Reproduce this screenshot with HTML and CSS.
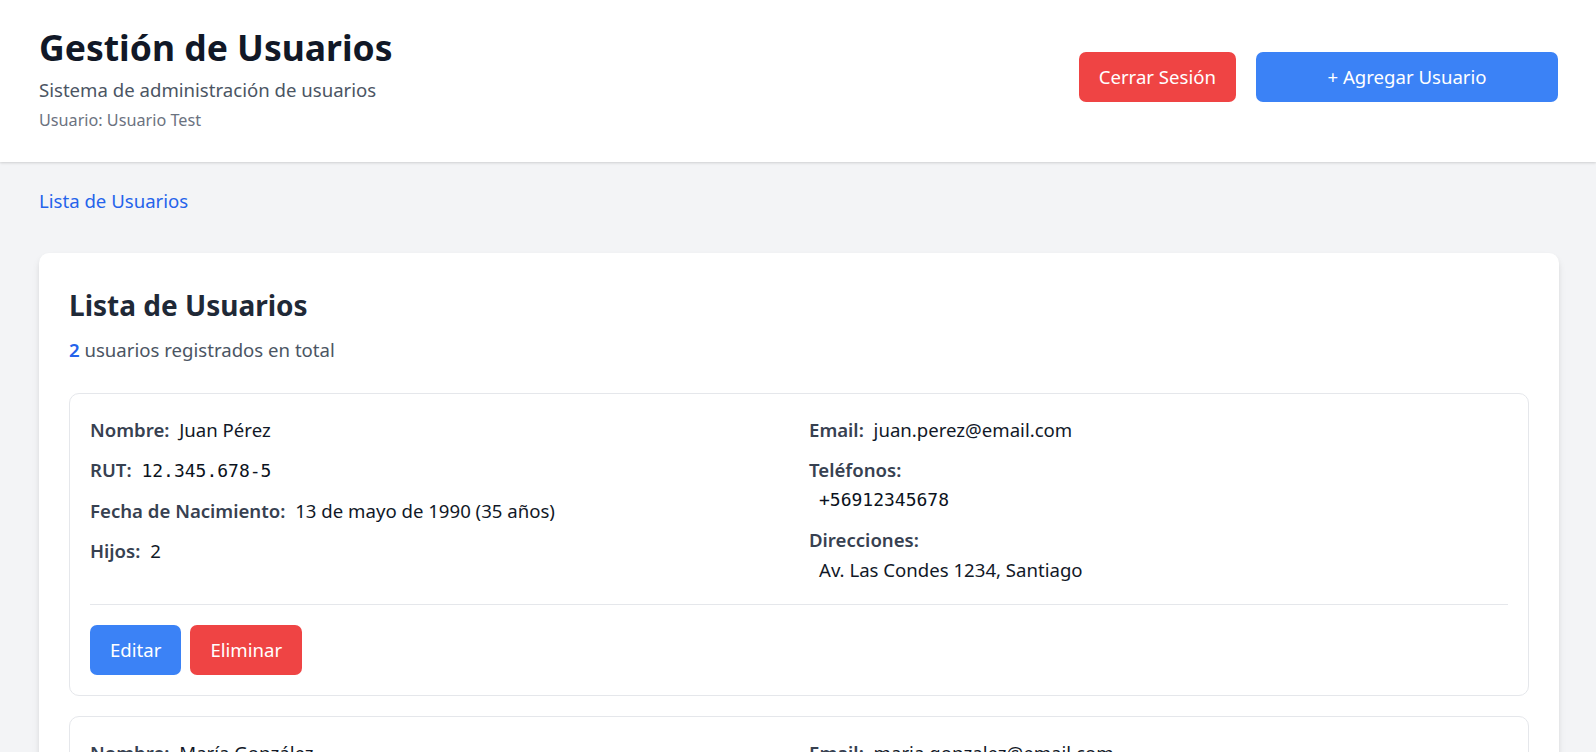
FILE: index.html
```html
<!DOCTYPE html>
<html lang="es">
<head>
<meta charset="utf-8">
<title>Gestión de Usuarios</title>
<link rel="stylesheet" href="styles.css">
</head>
<body>
<header class="app-header">
  <div class="header-inner">
    <div class="header-text">
      <h1 class="app-title">Gestión de Usuarios</h1>
      <p class="app-subtitle">Sistema de administración de usuarios</p>
      <p class="app-user">Usuario: Usuario Test</p>
    </div>
    <div class="header-actions">
      <button class="btn btn-red">Cerrar Sesión</button>
      <button class="btn btn-blue btn-wide">+ Agregar Usuario</button>
    </div>
  </div>
</header>
<nav class="breadcrumb"><a class="crumb-link" href="#">Lista de Usuarios</a></nav>
<main class="main">
  <section class="panel">
    <h2 class="panel-title">Lista de Usuarios</h2>
    <p class="panel-count"><span class="count-num">2</span> usuarios registrados en total</p>
    <div class="user-list">
      <article class="user-card">
        <div class="user-grid">
          <div class="col">
            <div class="field"><span class="label">Nombre:</span> <span class="value">Juan Pérez</span></div>
            <div class="field"><span class="label">RUT:</span> <span class="value mono">12.345.678-5</span></div>
            <div class="field"><span class="label">Fecha de Nacimiento:</span> <span class="value">13 de mayo de 1990 (35 años)</span></div>
            <div class="field"><span class="label">Hijos:</span> <span class="value">2</span></div>
          </div>
          <div class="col">
            <div class="field"><span class="label">Email:</span> <span class="value">juan.perez@email.com</span></div>
            <div class="field field-stack"><span class="label">Teléfonos:</span>
              <ul class="sublist sublist-mono"><li class="mono">+56912345678</li></ul>
            </div>
            <div class="field field-stack"><span class="label">Direcciones:</span>
              <ul class="sublist"><li>Av. Las Condes 1234, Santiago</li></ul>
            </div>
          </div>
        </div>
        <div class="card-actions">
          <button class="btn btn-blue">Editar</button>
          <button class="btn btn-red">Eliminar</button>
        </div>
      </article>
      <article class="user-card">
        <div class="user-grid">
          <div class="col">
            <div class="field"><span class="label">Nombre:</span> <span class="value">María González</span></div>
            <div class="field"><span class="label">RUT:</span> <span class="value mono">98.765.432-1</span></div>
            <div class="field"><span class="label">Fecha de Nacimiento:</span> <span class="value">22 de agosto de 1985 (40 años)</span></div>
            <div class="field"><span class="label">Hijos:</span> <span class="value">1</span></div>
          </div>
          <div class="col">
            <div class="field"><span class="label">Email:</span> <span class="value">maria.gonzalez@email.com</span></div>
            <div class="field field-stack"><span class="label">Teléfonos:</span>
              <ul class="sublist sublist-mono"><li class="mono">+56987654321</li></ul>
            </div>
            <div class="field field-stack"><span class="label">Direcciones:</span>
              <ul class="sublist"><li>Providencia 567, Santiago</li></ul>
            </div>
          </div>
        </div>
        <div class="card-actions">
          <button class="btn btn-blue">Editar</button>
          <button class="btn btn-red">Eliminar</button>
        </div>
      </article>
    </div>
  </section>
</main>
</body>
</html>
```

FILE: styles.css
```css
* {
  box-sizing: border-box;
  margin: 0;
  padding: 0;
}

body {
  font-family: "Noto Sans", "Open Sans", sans-serif;
  background: #f3f4f6;
  color: #111827;
  font-size: 18.6px;
  line-height: 30px;
}

.app-header {
  background: #ffffff;
  box-shadow: 0 1px 3px rgba(0, 0, 0, 0.1), 0 1px 2px rgba(0, 0, 0, 0.06);
}

.header-inner {
  display: flex;
  justify-content: space-between;
  align-items: center;
  padding: 25px 38px 29px 39px;
}

.app-title {
  font-size: 35.5px;
  line-height: 45px;
  font-weight: 700;
  color: #111827;
}

.app-subtitle {
  margin-top: 5px;
  color: #4b5563;
}

.app-user {
  margin-top: 3px;
  font-size: 16.2px;
  line-height: 25px;
  color: #6b7280;
}

.header-actions {
  display: flex;
  gap: 20px;
  margin-bottom: 4px;
}

.btn {
  font-family: inherit;
  font-size: 18.6px;
  line-height: 30px;
  padding: 10px 20px;
  border: 0;
  border-radius: 7px;
  color: #ffffff;
  cursor: pointer;
}

.btn-red {
  background: #ef4444;
}

.btn-blue {
  background: #3b82f6;
}

.btn-wide {
  width: 302px;
}

.breadcrumb {
  padding: 24px 38px 37px 39px;
}

.crumb-link {
  color: #2563eb;
  text-decoration: none;
}

.main {
  padding: 0 37px 40px 39px;
}

.panel {
  background: #ffffff;
  border-radius: 10px;
  box-shadow: 0 5px 8px -1px rgba(0, 0, 0, 0.1), 0 2px 5px -1px rgba(0, 0, 0, 0.06);
  padding: 32px 30px 30px;
}

.panel-title {
  font-size: 28px;
  line-height: 40px;
  font-weight: 700;
  color: #1f2937;
}

.panel-count {
  margin-top: 10px;
  margin-bottom: 28px;
  color: #4b5563;
}

.count-num {
  color: #2563eb;
  font-weight: 600;
}

.user-list {
  display: flex;
  flex-direction: column;
  gap: 20px;
}

.user-card {
  border: 1px solid #e5e7eb;
  border-radius: 10px;
  padding: 21px 20px 20px;
}

.user-grid {
  display: grid;
  grid-template-columns: 1fr 1fr;
  gap: 20px;
}

.col {
  display: flex;
  flex-direction: column;
  gap: 10px;
}

.label {
  font-weight: 600;
  color: #374151;
  margin-right: 5px;
}

.field-stack .label {
  display: block;
  margin-right: 0;
}

.value {
  color: #111827;
}

.mono {
  font-family: "DejaVu Sans Mono", "Liberation Mono", monospace;
  font-size: 18px;
  color: #0b1220;
}

.sublist {
  list-style: none;
  padding-left: 10px;
}

.sublist-mono li {
  line-height: 30px;
}

.card-actions {
  margin-top: 19px;
  border-top: 1px solid #e5e7eb;
  padding-top: 20px;
  display: flex;
  gap: 9px;
}
```
